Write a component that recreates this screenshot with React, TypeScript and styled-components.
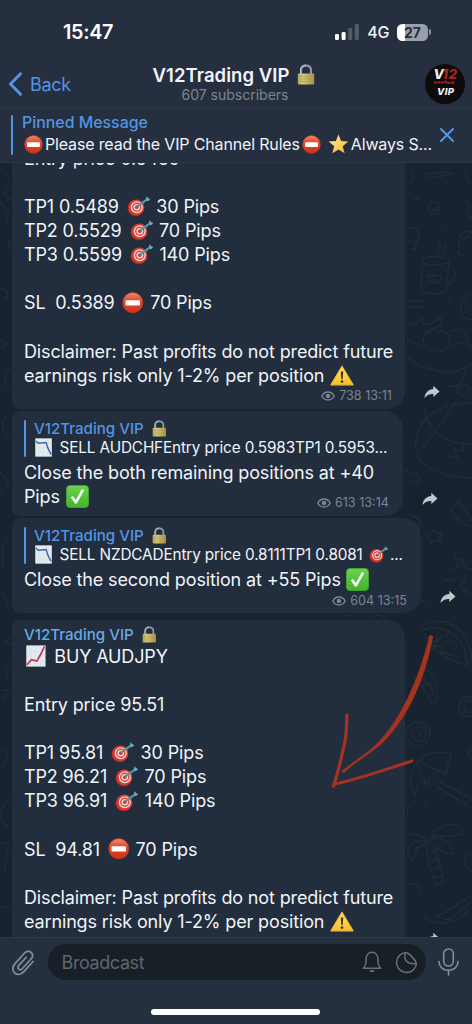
import React from "react";
import styled, { createGlobalStyle } from "styled-components";

const GlobalStyle = createGlobalStyle`
  * { box-sizing: border-box; }
  body { margin: 0; background: #18232f; }
`;

const Screen = styled.div`
  width: 472px;
  height: 1024px;
  display: flex;
  flex-direction: column;
  overflow: hidden;
  background: #18232f;
  font-family: Inter, "Liberation Sans", sans-serif;
  color: #f1f4f8;
  position: relative;
`;

/* ---------- header ---------- */
const Header = styled.header`
  height: 163px;
  flex: none;
  background: #252f3f;
  border-bottom: 1px solid #293545;
`;
const StatusBar = styled.div`
  height: 61px;
  padding: 3px 41px 0 63px;
  display: flex;
  align-items: center;
  justify-content: space-between;
`;
const Clock = styled.span`
  font-size: 19.8px;
  font-weight: 600;
  letter-spacing: -0.3px;
  color: #fff;
`;
const StatusIcons = styled.div`
  display: flex;
  align-items: center;
  gap: 8px;
`;
const Network = styled.span`
  font-size: 16px;
  font-weight: 500;
  letter-spacing: -0.4px;
`;
const Battery = styled.div`
  width: 31px;
  height: 17px;
  border-radius: 5.5px;
  background: linear-gradient(90deg, #fff 0 8px, #99a0aa 8px);
  color: #252f3f;
  font-size: 14px;
  font-weight: 700;
  line-height: 17.5px;
  text-align: center;
`;
const BatteryWrap = styled.div`
  display: flex;
  align-items: center;
  gap: 1px;
  &::after {
    content: "";
    width: 2px;
    height: 6px;
    border-radius: 0 2px 2px 0;
    background: #8a929d;
  }
`;
const NavBar = styled.div`
  height: 46px;
  padding: 0 7px 0 8px;
  display: grid;
  grid-template-columns: 110px 1fr 113px;
  align-items: center;
`;
const BackButton = styled.div`
  display: flex;
  align-items: center;
  gap: 7px;
  color: #5295e3;
  font-size: 18px;
  letter-spacing: -0.3px;
`;
const TitleBlock = styled.div`
  display: flex;
  flex-direction: column;
  align-items: center;
  margin-top: -2px;
`;
const Title = styled.div`
  display: flex;
  align-items: center;
  gap: 8px;
  font-size: 18.5px;
  line-height: 22px;
  font-weight: 600;
  letter-spacing: 0.05px;
  white-space: nowrap;
  margin-right: 2px;
`;
const Subtitle = styled.div`
  font-size: 14px;
  line-height: 17px;
  color: #7d8590;
`;
const Avatar = styled.div`
  justify-self: end;
  width: 40px;
  height: 40px;
`;
const Pinned = styled.div`
  height: 55px;
  border-top: 1px solid #2a3645;
  display: flex;
  align-items: center;
  padding: 0 18px 0 11px;
`;
const AccentBar = styled.div<{ $h: number }>`
  width: 2px;
  height: ${(p) => p.$h}px;
  border-radius: 1px;
  background: #5295e3;
  flex: none;
`;
const PinnedText = styled.div`
  flex: 1;
  padding: 0 0 3px 9px;
`;
const PinnedTitle = styled.div`
  color: #5295e3;
  font-size: 15.9px;
  line-height: 21px;
  font-weight: 500;
`;
const PinnedBody = styled.div`
  display: flex;
  align-items: center;
  font-size: 16px;
  line-height: 22px;
  letter-spacing: -0.16px;
  white-space: pre;
  padding-left: 2px;
`;

/* ---------- conversation ---------- */
const Chat = styled.main`
  flex: 1;
  min-height: 0;
  overflow: hidden;
  position: relative;
`;
const Wallpaper = styled.svg`
  position: absolute;
  inset: 0;
`;
const Messages = styled.div`
  position: relative;
  display: flex;
  flex-direction: column;
  padding-left: 12px;
`;
const MessageRow = styled.div<{ $top: number }>`
  display: flex;
  align-items: flex-end;
  gap: 12px;
  margin-top: ${(p) => p.$top}px;
`;
const Bubble = styled.article<{ $w: number; $h: number; $pt: number; $radius: string }>`
  width: ${(p) => p.$w}px;
  height: ${(p) => p.$h}px;
  padding: ${(p) => p.$pt}px 12px 0 12px;
  border-radius: ${(p) => p.$radius};
  background: #222d3d;
  display: flex;
  flex-direction: column;
`;
const ShareSlot = styled.div<{ $up: number }>`
  width: 30px;
  height: 30px;
  margin-bottom: ${(p) => p.$up}px;
  border-radius: 50%;
  background: #162230;
  display: grid;
  place-items: center;
`;
const Line = styled.div`
  height: 24.15px;
  flex: none;
  display: flex;
  align-items: center;
  font-size: 18px;
  letter-spacing: -0.14px;
  white-space: pre;
`;
const Space = styled.span<{ $w: number }>`
  width: ${(p) => p.$w}px;
  flex: none;
`;
const Meta = styled.div<{ $mt: number; $mr?: number }>`
  display: flex;
  align-items: center;
  align-self: flex-end;
  gap: 4px;
  height: 14px;
  margin-top: ${(p) => p.$mt}px;
  margin-right: ${(p) => p.$mr ?? 0}px;
  font-size: 12.6px;
  color: #7b8592;
  white-space: nowrap;
`;
const Quote = styled.div`
  display: flex;
  align-items: center;
  height: 38px;
  flex: none;
  margin-bottom: 3.500px;
`;
const QuoteText = styled.div`
  padding-left: 8px;
`;
const Author = styled.div<{ $color: string }>`
  display: flex;
  align-items: center;
  gap: 8px;
  height: 19px;
  font-size: 15.1px;
  font-weight: 500;
  color: ${(p) => p.$color};
  white-space: nowrap;
`;
const QuoteBody = styled.div`
  display: flex;
  align-items: center;
  height: 19px;
  padding-left: 1px;
  font-size: 15.3px;
  letter-spacing: -0.13px;
  white-space: pre;
`;

/* ---------- composer ---------- */
const Composer = styled.footer`
  height: 87px;
  flex: none;
  background: #24303e;
  border-top: 1px solid #2c3846;
  display: flex;
  flex-direction: column;
  align-items: center;
`;
const InputRow = styled.div`
  width: 100%;
  height: 48px;
  padding: 0 13px 0 11px;
  display: flex;
  align-items: center;
  justify-content: space-between;
`;
const Input = styled.div`
  width: 378px;
  height: 36px;
  border-radius: 18px;
  background: #181f27;
  padding: 0 8px 0 14px;
  display: flex;
  align-items: center;
  gap: 13px;
  color: #5f666e;
  font-size: 18px;
  letter-spacing: -0.4px;
`;
const Placeholder = styled.span`
  flex: 1;
`;
const HomeIndicator = styled.div`
  width: 169px;
  height: 6px;
  border-radius: 3px;
  background: #fff;
  margin: 23px 1px 0 0;
`;

/* ---------- drawings ---------- */
const Lock = ({ size = 20 }: { size?: number }) => (
  <svg width={size * 0.86} height={size} viewBox="0 0 18 21">
    <defs>
      <linearGradient id="lockBody" x1="0" y1="0" x2="1" y2="0">
        <stop offset="0" stopColor="#b9a659" />
        <stop offset=".3" stopColor="#d6c980" />
        <stop offset="1" stopColor="#a8923f" />
      </linearGradient>
    </defs>
    <path d="M4 11V6.2C4 3.2 6.2 1.6 9 1.6s5 1.6 5 4.6V11" fill="none" stroke="#8e98a4" strokeWidth="2.2" />
    <path d="M3.5 10V6.2C3.5 3 6 1.1 9 1.1" fill="none" stroke="#cbd2d9" strokeWidth=".8" />
    <rect x=".8" y="9.5" width="16.4" height="11" rx="1" fill="url(#lockBody)" />
    <path d="M1 12.5h16M1 15h16M1 17.5h16" stroke="#a59552" strokeWidth=".6" />
  </svg>
);
const NoEntry = ({ size = 21.5 }: { size?: number }) => (
  <svg width={size} height={size} viewBox="0 0 22 22">
    <defs>
      <linearGradient id="stopRed" x1="0" y1="0" x2="0" y2="1">
        <stop offset="0" stopColor="#f08a6c" />
        <stop offset=".4" stopColor="#e2492e" />
        <stop offset="1" stopColor="#cf3019" />
      </linearGradient>
    </defs>
    <circle cx="11" cy="11" r="10.4" fill="url(#stopRed)" stroke="#b93a25" strokeWidth=".6" />
    <rect x="3.6" y="8.4" width="14.8" height="5.4" rx=".5" fill="#fff" />
  </svg>
);
const Target = ({ size = 23 }: { size?: number }) => (
  <svg width={size} height={size * 0.9} viewBox="0 0 23 20.7">
    <ellipse cx="8.7" cy="12.2" rx="8.2" ry="8.2" fill="#a82a26" />
    <circle cx="9.4" cy="11.4" r="7.9" fill="#d63c34" />
    <circle cx="9.8" cy="11.2" r="6" fill="#f3dcd6" />
    <circle cx="9.8" cy="11.2" r="4.7" fill="#d4473f" />
    <circle cx="9.8" cy="11.2" r="3.3" fill="#f3dcd6" />
    <circle cx="9.8" cy="11.2" r="1.9" fill="#cf3d37" />
    <path d="M10.200 10.800 18 4.800" stroke="#4a93a2" strokeWidth="1.9" />
    <path d="m14.600 6.400 4.200-3.300.9-2.800 1.500 2 2.100.5-1.600 2-3.300.8-2.400 2.100z" fill="#69b3c0" />
    <path d="m15.200 7.200 5-3.900" stroke="#2f6a78" strokeWidth=".6" />
  </svg>
);
const Warning = () => (
  <svg width="24" height="21" viewBox="0 0 24 21">
    <defs>
      <linearGradient id="warnFill" x1="0" y1="0" x2="0" y2="1">
        <stop offset="0" stopColor="#ffe36b" />
        <stop offset="1" stopColor="#f8bf26" />
      </linearGradient>
    </defs>
    <path d="M12 1.2 23 19.8H1z" fill="url(#warnFill)" stroke="#f2c139" strokeWidth="1.2" strokeLinejoin="round" />
    <path d="M10.8 6.5h2.4l-.5 7.4h-1.4z" fill="#37301a" />
    <circle cx="12" cy="16.6" r="1.3" fill="#37301a" />
  </svg>
);
const Star = () => (
  <svg width="21" height="20" viewBox="0 0 21 20">
    <defs>
      <linearGradient id="starFill" x1="0" y1="0" x2="1" y2="1">
        <stop offset="0" stopColor="#ffeaa0" />
        <stop offset="1" stopColor="#f4b92c" />
      </linearGradient>
    </defs>
    <path d="m10.5.6 2.6 6.5 7.2.5-5.6 4.6 1.9 7.1-6.1-3.9-6.1 3.9 1.8-7.1L.7 7.6l7.2-.5z" fill="url(#starFill)" />
  </svg>
);
const Chart = ({ up, size = 22 }: { up?: boolean; size?: number }) => (
  <svg width={size * 0.9} height={size} viewBox="0 0 20 22">
    <rect x=".3" y=".3" width="19.4" height="21.4" fill="#e3ebf0" />
    <path d="M5 .3v21.4M10 .3v21.4M15 .3v21.4M.3 6h19.4M.3 11h19.4M.3 16h19.4" stroke="#d3dde4" strokeWidth=".5" />
    {up ? (
      <path d="m1 19.8 4.5-5 5.5 1.4L15 9l3.6-7.6" fill="none" stroke="#c83246" strokeWidth="1.7" />
    ) : (
      <path d="M1 3.5 4 6l9-.8 2 6.3 3.8 7.5" fill="none" stroke="#3e68b0" strokeWidth="1.7" />
    )}
  </svg>
);
const Check = () => (
  <svg width="23" height="23" viewBox="0 0 23 23">
    <defs>
      <linearGradient id="checkFill" x1="0" y1="0" x2="0" y2="1">
        <stop offset="0" stopColor="#6bd24c" />
        <stop offset="1" stopColor="#43b42c" />
      </linearGradient>
    </defs>
    <rect x=".5" y=".5" width="22" height="22" rx="3.5" fill="url(#checkFill)" stroke="#46a935" strokeWidth=".8" />
    <path d="M4.8 12.2 7 10.9l2.8 4L15.9 4l2.3.9-7.4 13.7H9z" fill="#fff" />
  </svg>
);
const Eye = () => (
  <svg width="14" height="10" viewBox="0 0 14 10">
    <path d="M.8 5C2.2 2.3 4.4 1 7 1s4.8 1.3 6.2 4C11.8 7.7 9.6 9 7 9S2.2 7.7.8 5z" fill="none" stroke="#7b8592" strokeWidth="1.4" />
    <circle cx="7" cy="5" r="2.3" fill="#7b8592" />
  </svg>
);
const Share = () => (
  <svg width="16" height="14" viewBox="0 0 16 14">
    <path d="M9.3.7 15.5 6.4 9.3 12V8.900C5.5 8.700 2.900 9.900.5 13 .9 8.200 3.800 4.400 9.3 3.900z" fill="#c3c6c8" />
  </svg>
);
const Signal = () => (
  <svg width="24" height="16" viewBox="0 0 24 16">
    <rect x="0" y="10" width="4" height="6" rx="1.3" fill="#fff" />
    <rect x="6.6" y="8" width="4" height="8" rx="1.3" fill="#fff" />
    <rect x="13.2" y="4" width="4" height="12" rx="1.3" fill="#525c69" />
    <rect x="19.8" y="0" width="4" height="16" rx="1.3" fill="#525c69" />
  </svg>
);
const Chevron = () => (
  <svg width="15" height="24" viewBox="0 0 15 24">
    <path d="M12.500 1.800 2.500 12l10 10.200" fill="none" stroke="#5295e3" strokeWidth="3" strokeLinecap="round" strokeLinejoin="round" />
  </svg>
);
const AvatarArt = () => (
  <svg width="40" height="40" viewBox="0 0 40 40">
    <circle cx="20" cy="20" r="20" fill="#0d0b0c" />
    <g fontFamily="Inter, sans-serif" fontWeight="800" fontStyle="italic">
      <text x="8.5" y="14.5" fontSize="13.5" fill="#eeeeee">V</text>
      <text x="17" y="14.5" fontSize="13.5" fill="#a52622" textLength="15">12</text>
      <text x="12" y="31" fontSize="9.5" fill="#f1f1f1" textLength="17">VIP</text>
    </g>
    <path d="M9 18.500h9l2-1 2 1.500 8-.5" fill="none" stroke="#a3221e" strokeWidth="2" strokeDasharray="3 .6" />
  </svg>
);
const Close = () => (
  <svg width="14" height="14" viewBox="0 0 14 14">
    <path d="m1 1 12 12M13 1 1 13" stroke="#5295e3" strokeWidth="2" strokeLinecap="round" />
  </svg>
);
const Clip = () => (
  <svg width="24" height="27" viewBox="0 0 24 27">
    <path
      d="m22 12.500-8.600 9.600c-3 3.400-7 4.200-9.700 1.900-2.700-2.400-2.500-6.300.3-9.400l9.300-10.300c2-2.300 4.900-2.700 6.800-1 1.900 1.800 1.900 4.500-.1 6.700l-8.600 9.500c-1.200 1.300-2.700 1.500-3.700.6-1.100-1-.9-2.500.2-3.700l7.300-8.100"
      fill="none" stroke="#848e99" strokeWidth="1.700" strokeLinecap="round"
    />
  </svg>
);
const Bell = () => (
  <svg width="20" height="22" viewBox="0 0 20 22">
    <path d="M1.300 17.300c2.300-2 2.700-3.900 2.700-8.300C4 4.300 6.300 1.200 10 1.200S16 4.300 16 9c0 4.400.4 6.300 2.700 8.300z" fill="none" stroke="#697078" strokeWidth="1.500" strokeLinejoin="round" />
    <path d="M7.300 19.300h5.400c-.5 1.300-1.400 1.900-2.700 1.900s-2.200-.6-2.700-1.900z" fill="#697078" />
  </svg>
);
const Sticker = () => (
  <svg width="23" height="23" viewBox="0 0 23 23">
    <path d="M11 1.500a10 10 0 1 0 10.500 11C20.500 9 14 2 11 1.500z" fill="none" stroke="#697078" strokeWidth="1.500" strokeLinejoin="round" />
    <path d="M10.300 1.600c-1.800 7.200 1.400 12.200 11.200 10.900" fill="none" stroke="#697078" strokeWidth="1.500" />
  </svg>
);
const Mic = () => (
  <svg width="21" height="28" viewBox="0 0 21 28">
    <rect x="5.700" y="1" width="9.600" height="17" rx="4.800" fill="none" stroke="#848e99" strokeWidth="1.600" />
    <path d="M1 13.500c0 5.200 4 8.700 9.500 8.700s9.500-3.500 9.500-8.700M10.500 22.200V27" fill="none" stroke="#848e99" strokeWidth="1.600" strokeLinecap="round" />
  </svg>
);
const ArrowLayer = styled.svg`
  position: absolute;
  left: 328px;
  top: 630px;
`;
const DrawnArrow = () => (
  <ArrowLayer width="110" height="162" viewBox="328 630 110 162">
    <path d="M429.500 636c1.500-1.500 3.500-.5 3.200 1.300C424 684 405 722 380 745c-13 11-25 17-36 27.500-2 .8-2.700-.6-1-2.200 12-10 23-16 33.500-26C400 721 419 680 429.500 636z" fill="#a63322" stroke="#a63322" strokeWidth=".5" />
    <path d="M347 715c-.7 20-1 22-3.500 33-3.500 16-6 26-10 38" fill="none" stroke="#a63322" strokeWidth="3.200" strokeLinecap="round" />
    <path d="M335 784c27-6 48-14 77-23" fill="none" stroke="#a63322" strokeWidth="2.900" strokeLinecap="round" />
  </ArrowLayer>
);
const Doodles = () => (
  <Wallpaper width="472" height="774" viewBox="0 163 472 774" fill="none" stroke="#202c38" strokeWidth="1.500" strokeLinecap="round" strokeLinejoin="round">
    <path d="M424 172c8 6 18-4 29 2M425 177c10 3 20-5 29-2M411 169c5 6 2 12-2 14M418 197l1 4M414 199l5 1M465 170l3 11 5 1" />
    <path d="M440 207a6 6 0 1 1-6-5 4 4 0 1 1-2 7M447 182l1 2M445 226v2M466 201l4 4-3 6 3 7 5 1" />
    <path d="M407 228h8c5 3 5 12 1 15l-1 7-5-2M406 241l9 1M464 256l-6-2c3-9-2-19 8-23l7 2M462 240l8-4" />
    <path d="m423 259-2 31c4 5 21 5 25 0l3-29c-4-5-22-6-26-2zM448 268c11-3 8 16-2 17M424 263c7 3 18 2 24 0M438 255c-3-5 5-6 1-12M444 255c-3-4 4-8 1-12M427 275l14 1-1 7-12-2zM430 277l8 5" />
    <path d="M406 301h17v6h-16M473 294c-13 0-16 19-8 24l8 2M466 303l1 1M470 309l1 1M466 313l1 0M449 300v2" />
    <path d="M410 324c6 2 8-5 15-5l-2 6 9-2 9-5 1 7-12 5-1 5M406 333l3 8 12 4M438 331a10 10 0 1 0 1 17M438 331c12-1 15 12 7 18l-8 3M406 354c7 11 22 17 38 17M450 332c6-5 15-1 18 7M453 347c3-8 17-4 20 2M425 365c12 9 28 10 45 0M449 386c9 3 17-8 16-15M470 391a6 6 0 1 0-4 5" />
    <path d="M472 403c-25-1-54 11-56 38-3 24 16 34 56 37M424 409c5 20 18 36 49 35M455 402c-8 16-23 34-36 50M448 456l9 2-2-9 8 2 1-8 8 2M405 471c9 1 14 3 15 10l-8 1M450 510l9-9 13 20M452 511c4 8 14 15 21 15M410 515c13 3 12 12 6 17M434 529l3 4 5 0-3 4 2 5-6-2-5 4 0-6-5-3 6-1z" />
    <path d="M451 570l8-4-4-8 7 2 3 8 8 2M444 580l9 0 3 8 8-6 1-8M460 590c4 0 8 1 10 5M426 566v1M454 552l1 1M409 600c8-2 14 0 20 4M342 618c4-4 8-4 11 0M370 618l8-3 7 3" />
    <path d="M421 627c13-11 46-9 51 32l-5 6c-16-3-37-14-46-38zM423 630c15-7 41 0 44 34M442 635l-10 14 26 8M439 632c7-7 12 1 5 6M448 643c7-5 12 1 6 8M428 637c3 8 11 5 9-2M435 647c7-4 8 3 5 5" />
    <path d="M420 671c12-3 19 6 16 32l-5-2-9-15-9-11M421 675l12 17M423 686c6-6 11 0 9 8M463 682h1M472 697a10 10 0 1 0 0 19M472 701a6 6 0 1 0 0 11M451 729v1" />
    <circle cx="418" cy="734" r="12" /><circle cx="419" cy="734" r="7" /><path d="M419 731c4 3 2 6 0 6M416 761c8-8 21-10 35-8l-5 20c-8-4-15-2-19 12-5-6-11-1-12 11-8-16-6-30 9-38M416 761l30 13M416 761l11 25M438 781l34 18M436 786l32 20M472 748c-6 4-4 9 0 10M448 810v1" />
    <path d="M426 842c-3-8-16-12-20-3M427 842c-17-4-24 8-15 20l5-14 10-5M427 842c10-9 25-1 26 11l-8 1-15-11M432 836c5-14 31-16 32-3-6 4-23 3-32 3M427 843c0 16 3 30 10 42l7-4-9-32M430 853l7-2M431 861l8-3M433 870l8-4M435 878l8-3M468 853c-7 8-3 16 5 19M405 885c11-4 18 4 13 8" />
    <path d="M470 897c-13 6-21 15-34 19l13 4 24-20M424 917c11 10 34 7 45-7M407 814l2-8M422 800l5 4" />
    <path d="M2 170c8 6 9 14 2 23l7 7M0 202l9 11-3 8M9 241v8M0 289c8-2 9 5 6 10M7 319v2M0 339l6 5-5 5M10 368c-7 6-6 13-1 20M7 415c-8 10-3 19 2 24M0 472l9 11-9 10M7 540c-9 8-1 18-5 27M0 592c9 2 5 13 9 18M10 637l-5 6 7 1M10 663c-7 6-4 13-2 17M0 690h9l-7 10M0 749c9 3 9 12 2 17M11 799c-11 5-14 20-3 28M0 843h9l-5 30M0 907l10 1" />
  </Wallpaper>
);

/* ---------- message parts ---------- */
type Price = { label: string; pips: string; icon?: "stop" };
const PriceLine = ({ label, pips, icon }: Price) => (
  <Line>
    {label}
    <Space $w={icon === "stop" ? 7.5 : 8} />
    {icon === "stop" ? <NoEntry /> : <Target />}
    <Space $w={6.5} />
    {pips}
  </Line>
);
const Disclaimer = () => (
  <>
    <Line>Disclaimer: Past profits do not predict future</Line>
    <Line>
      earnings risk only 1-2% per position
      <Space $w={5.5} />
      <Warning />
    </Line>
  </>
);
const Views = ({ count, time, mt, mr }: { count: string; time: string; mt: number; mr?: number }) => (
  <Meta $mt={mt} $mr={mr}>
    <Eye />
    <span>{count} {time}</span>
  </Meta>
);
const ShareButton = ({ up }: { up: number }) => (
  <ShareSlot $up={up}>
    <Share />
  </ShareSlot>
);
const Reply = ({ children }: { children: React.ReactNode }) => (
  <Quote>
    <AccentBar $h={37} />
    <QuoteText>
      <Author $color="#5295e3">V12Trading VIP <Lock size={17} /></Author>
      <QuoteBody><Chart size={19} /><Space $w={7.5} />{children}</QuoteBody>
    </QuoteText>
  </Quote>
);

export default function App() {
  return (
    <Screen>
      <GlobalStyle />
      <Header>
        <StatusBar>
          <Clock>15:47</Clock>
          <StatusIcons>
            <Signal />
            <Network>4G</Network>
            <BatteryWrap><Battery>27</Battery></BatteryWrap>
          </StatusIcons>
        </StatusBar>
        <NavBar>
          <BackButton><Chevron />Back</BackButton>
          <TitleBlock>
            <Title>V12Trading VIP <Lock size={21} /></Title>
            <Subtitle>607 subscribers</Subtitle>
          </TitleBlock>
          <Avatar><AvatarArt /></Avatar>
        </NavBar>
        <Pinned>
          <AccentBar $h={40} />
          <PinnedText>
            <PinnedTitle>Pinned Message</PinnedTitle>
            <PinnedBody>
              <NoEntry size={19} />
              <Space $w={2} />
              Please read the VIP Channel Rules
              <Space $w={2} />
              <NoEntry size={19} />
              <Space $w={7} />
              <Star />
              <Space $w={2} />
              Always S...
            </PinnedBody>
          </PinnedText>
          <Close />
        </Pinned>
      </Header>

      <Chat>
        <Doodles />
        <Messages>
          <MessageRow $top={-17}>
            <Bubble $w={393} $h={263} $pt={0} $radius="0 0 18px 8px">
              <Line>Entry price 0.5459</Line>
              <Line />
              <PriceLine label="TP1 0.5489" pips="30 Pips" />
              <PriceLine label="TP2 0.5529" pips="70 Pips" />
              <PriceLine label="TP3 0.5599" pips="140 Pips" />
              <Line />
              <PriceLine label="SL  0.5389" pips="70 Pips" icon="stop" />
              <Line />
              <Disclaimer />
              <Views count="738" time="13:11" mt={1.5} mr={1} />
            </Bubble>
            <ShareButton up={2} />
          </MessageRow>

          <MessageRow $top={2}>
            <Bubble $w={391} $h={105} $pt={8} $radius="8px 18px 18px 8px">
              <Reply>SELL AUDCHFEntry price 0.5983TP1 0.5953...</Reply>
              <Line>Close the both remaining positions at +40</Line>
              <Line>Pips<Space $w={6} /><Check /></Line>
              <Views count="613" time="13:14" mt={-13} mr={2} />
            </Bubble>
            <ShareButton up={2} />
          </MessageRow>

          <MessageRow $top={2}>
            <Bubble $w={409} $h={95} $pt={8} $radius="8px 18px 18px 8px">
              <Reply>SELL NZDCADEntry price 0.8111TP1 0.8081 <Space $w={2} /><Target size={19} /><Space $w={2} />...</Reply>
              <Line>Close the second position at +55 Pips<Space $w={5.5} /><Check /></Line>
              <Views count="604" time="13:15" mt={2} mr={2} />
            </Bubble>
            <ShareButton up={1} />
          </MessageRow>

          <MessageRow $top={7}>
            <Bubble $w={393} $h={346} $pt={5} $radius="8px 18px 18px 8px">
              <Author $color="#68aae2">V12Trading VIP <Lock size={17} /></Author>
              <Line><Space $w={2} /><Chart up /><Space $w={8.5} />BUY AUDJPY</Line>
              <Line />
              <Line>Entry price 95.51</Line>
              <Line />
              <PriceLine label="TP1 95.81" pips="30 Pips" />
              <PriceLine label="TP2 96.21" pips="70 Pips" />
              <PriceLine label="TP3 96.91" pips="140 Pips" />
              <Line />
              <PriceLine label="SL  94.81" pips="70 Pips" icon="stop" />
              <Line />
              <Disclaimer />
            </Bubble>
            <ShareButton up={12} />
          </MessageRow>
        </Messages>
      </Chat>

      <Composer>
        <InputRow>
          <Clip />
          <Input>
            <Placeholder>Broadcast</Placeholder>
            <Bell />
            <Sticker />
          </Input>
          <Mic />
        </InputRow>
        <HomeIndicator />
      </Composer>
      <DrawnArrow />
    </Screen>
  );
}
